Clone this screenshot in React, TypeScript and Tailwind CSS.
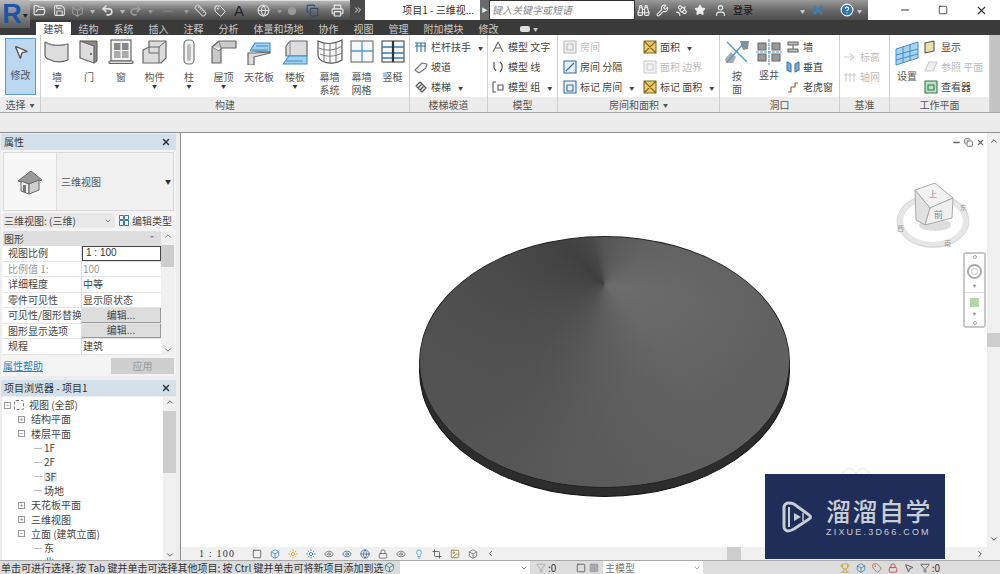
import type { ReactNode } from "react";
import {
  Binoculars, ChevronDown, ChevronLeft, ChevronRight, ChevronUp, ChevronsRight, CircleHelp, Copy, Eye, FolderOpen, Minus,
  Printer, Redo2, Ruler, Satellite, Save, Square, Star, Sun, Undo2, User, Wrench, X, Box, Globe, Tag, Filter, Lightbulb, Crop, MousePointer2, Lock, Image, Trophy,
} from "lucide-react";

const Ic = ({ s = 26, children }: { s?: number; children: ReactNode }) => (
  <svg width={s} height={s} viewBox="0 0 26 26" className="shrink-0">
    {children}
  </svg>
);

const g = { stroke: "#666", strokeWidth: 1.2, fill: "#dcdcdc", strokeLinejoin: "round" as const };
const b = { stroke: "#3f8fc9", strokeWidth: 1.1, fill: "#9fd0ef", strokeLinejoin: "round" as const };

const LARGE: { label: string[]; w: string; arrow?: boolean; icon: ReactNode }[] = [
  { label: ["墙"], w: "w-[32px]", arrow: true, icon: <Ic><path d="M1 3c7 4 16 4 23 2v16c-7 3-14 2-20-1-2-1-3-2-3-4z" {...g} /><path d="M1 3c6 4 16 4 23 2" fill="none" stroke="#888" /></Ic> },
  { label: ["门"], w: "w-[32px]", icon: <Ic><path d="M4 2h17v20l-3 2z" fill="#8a8a8a" stroke="#555" /><path d="M4 2l14 5v17L4 19z" {...g} /><circle cx="15" cy="15" r="1" fill="#555" /></Ic> },
  { label: ["窗"], w: "w-[32px]", icon: <Ic><rect x="3" y="1" width="20" height="21" fill="#f2f2f2" stroke="#666" strokeWidth="1.2" /><rect x="6" y="4" width="6.5" height="7" fill="#888" /><rect x="14" y="4" width="6.5" height="7" fill="#888" /><rect x="6" y="12" width="6.5" height="7" fill="#aaa" /><rect x="14" y="12" width="6.5" height="7" fill="#aaa" /><rect x="1" y="22" width="24" height="2.5" rx="1" {...g} /></Ic> },
  { label: ["构件"], w: "w-[35px]", arrow: true, icon: <Ic><path d="M1 11l6-3V2h17v17l-5 5H1z" {...g} /><path d="M7 8h10v6H7zM17 8l7-6M17 14v10" fill="none" stroke="#666" /></Ic> },
  { label: ["柱"], w: "w-[34px]", arrow: true, icon: <Ic><rect x="8" y="1" width="10" height="24" rx="4" fill="#f2f2f2" stroke="#777" strokeWidth="1.2" /><rect x="11" y="5" width="4" height="17" rx="2" fill="#bbb" /></Ic> },
  { label: ["屋顶"], w: "w-[35px]", arrow: true, icon: <Ic><path d="M1 24V8l7-6h17v7H10v15z" fill="#c9c9c9" stroke="#666" strokeWidth="1.2" strokeLinejoin="round" /><path d="M1 8l7 4 2-3" fill="#eee" stroke="#888" /><path d="M8 2l2 7" stroke="#888" /></Ic> },
  { label: ["天花板"], w: "w-[36px]", icon: <Ic><path d="M4 12L9 4h15v9z" {...b} /><path d="M2 26V14h7l15-1v1L8 18v8z" {...g} /><path d="M10 7h12M6 11h16" stroke="#3f8fc9" /></Ic> },
  { label: ["楼板"], w: "w-[36px]", arrow: true, icon: <Ic><path d="M8 2h17v15H4V7z" {...g} /><path d="M8 2v15" stroke="#888" /><path d="M1 25l6-8h18v8z" {...b} /><path d="M4 22h17" stroke="#3f8fc9" /></Ic> },
  { label: ["幕墙", "系统"], w: "w-[33px]", icon: <Ic><path d="M1 2c8 4 16 3 24-1v20c-6 4-14 4-20 1-3-2-4-4-4-6z" fill="#fafafa" stroke="#555" strokeWidth="1.2" /><path d="M7 4v19M13 5v19M19 4v19M2 9c7 3 15 3 23-2M3 15c6 3 15 3 22-1" fill="none" stroke="#777" /></Ic> },
  { label: ["幕墙", "网格"], w: "w-[31px]", icon: <Ic><rect x="2" y="2" width="22" height="21" fill="#f7f7f7" stroke="#777" strokeWidth="1.2" /><path d="M2 12h22M13 2v21" stroke="#4d9bd1" strokeWidth="1.3" /></Ic> },
  { label: ["竖梃"], w: "w-[31px]", icon: <Ic><rect x="2" y="2" width="22" height="21" fill="#f7f7f7" stroke="#555" strokeWidth="1.2" /><path d="M2 8h22M2 14h22M2 19h22" stroke="#2f7fb5" strokeWidth="1.4" /><path d="M13 2v21" stroke="#333" strokeWidth="2.2" /></Ic> },
];

const Small = ({ icon, text, arrow, dim }: { icon: ReactNode; text: string; arrow?: boolean; dim?: boolean }) => (
  <div className={`flex items-center gap-[3px] h-[20px] whitespace-nowrap ${dim ? "text-[#bdbdbd]" : "text-[#444]"}`}>
    {icon}
    <span className="whitespace-pre">{text}</span>
    {arrow && <span className="ml-[4px] text-[5px]">▼</span>}
  </div>
);

const PanelFoot = ({ children }: { children: ReactNode }) => (
  <div className="h-[15px] bg-[#ececec] flex items-center justify-center text-[#555] whitespace-nowrap">{children}</div>
);

const Panel = ({ w, foot, children }: { w: string; foot: ReactNode; children: ReactNode }) => (
  <div className={`${w} shrink-0 flex flex-col border-r border-[#cfcfcf]`}>
    <div className="h-[63px] flex overflow-hidden">{children}</div>
    <PanelFoot>{foot}</PanelFoot>
  </div>
);

const TABS = ["结构", "系统", "插入", "注释", "分析", "体量和场地", "协作", "视图", "管理", "附加模块", "修改"];

const rowIcon = (c: string, d: string, fill = "none") => (
  <svg width="14" height="14" viewBox="0 0 14 14" className="shrink-0">
    <path d={d} fill={fill} stroke={c} strokeWidth="1.1" strokeLinejoin="round" />
  </svg>
);

const PROPS: { k: string; v: string; kind?: string }[] = [
  { k: "视图比例", v: "1 : 100", kind: "input" },
  { k: "比例值 1:", v: "100", kind: "dim" },
  { k: "详细程度", v: "中等" },
  { k: "零件可见性", v: "显示原状态" },
  { k: "可见性/图形替换", v: "编辑...", kind: "btn" },
  { k: "图形显示选项", v: "编辑...", kind: "btn" },
  { k: "规程", v: "建筑" },
];

const TREE: { t: string; pad: string; sign?: string; sel?: boolean }[] = [
  { t: "结构平面", pad: "pl-[14px]", sign: "+" },
  { t: "楼层平面", pad: "pl-[14px]", sign: "−" },
  { t: "1F", pad: "pl-[30px]" },
  { t: "2F", pad: "pl-[30px]" },
  { t: "3F", pad: "pl-[30px]", sel: true },
  { t: "场地", pad: "pl-[30px]" },
  { t: "天花板平面", pad: "pl-[14px]", sign: "+" },
  { t: "三维视图", pad: "pl-[14px]", sign: "+" },
  { t: "立面 (建筑立面)", pad: "pl-[14px]", sign: "−" },
  { t: "东", pad: "pl-[30px]" },
  { t: "北", pad: "pl-[30px]" },
];

const Scrollbar = ({ thumb }: { thumb: string }) => (
  <div className="w-[13px] shrink-0 bg-[#f0f0f0] flex flex-col items-center justify-between relative">
    <ChevronUp size={10} className="text-[#555]" />
    <div className={`absolute left-0 right-0 bg-[#cdcdcd] ${thumb}`} />
    <ChevronDown size={10} className="text-[#555]" />
  </div>
);

const PanelHeader = ({ title }: { title: string }) => (
  <div className="h-[16px] shrink-0 bg-[#d3dfe9] flex items-center justify-between pl-[3px] pr-[5px] text-[#333]">
    <span>{title}</span>
    <X size={10} strokeWidth={3.5} className="text-[#333]" />
  </div>
);

// little dropdown marker of the quick access bar
const Arrow = ({ ml, c = "text-[#bbb]" }: { ml: string; c?: string }) => (
  <span className={`w-[5px] text-[5px] shrink-0 ${ml} ${c}`}>▼</span>
);

const VIEW_ICONS = [Square, Box, Sun, Sun, Eye, Eye, Globe, Lock, Eye, Lightbulb, Crop, Image, Box];
const VIEW_COLORS = ["#555", "#3f8fc9", "#e0a030", "#3f7fb0", "#777", "#4a6fa0", "#4a6fa0", "#666", "#777", "#4a9fd0", "#555", "#a08040", "#777"];

export default function App() {
  return (
    <div className="w-[1000px] h-[574px] overflow-hidden flex flex-col bg-[#ececec] text-[10px] leading-none text-[#444] font-['Noto_Sans_CJK_SC','Noto_Sans',sans-serif]">
      {/* title bar */}
      <div className="h-[20px] shrink-0 flex bg-white relative z-10">
        <div className="w-[30px] h-[28px] shrink-0 flex items-center justify-center gap-[1px] bg-gradient-to-b from-[#b9b9b9] to-[#5c5c5c]">
          <span className="text-[27px] leading-[28px] font-bold text-[#1a55a8] font-['Liberation_Sans',sans-serif]">R</span>
          <span className="text-[5px] text-[#222]">▼</span>
        </div>
        <div className="w-[320px] shrink-0 flex items-center pl-[3px] bg-gradient-to-b from-[#b5b5b5] via-[#6f6f6f] to-[#4a4a4a] border-t border-[#ddd]">
          <FolderOpen size={13} className="text-[#eee] shrink-0" />
          <Save size={13} className="ml-[7px] text-[#ddd] shrink-0" />
          <Box size={13} className="ml-[5px] text-[#999] shrink-0" />
          <Arrow ml="ml-[6px]" />
          <Undo2 size={13} strokeWidth={3} className="ml-[6px] text-[#ddd] shrink-0" />
          <Arrow ml="ml-[6px]" />
          <Redo2 size={13} strokeWidth={3} className="ml-[4px] text-[#999] shrink-0" />
          <Arrow ml="ml-[6px]" c="text-[#999]" />
          <Minus size={14} className="ml-[8px] text-[#888] shrink-0" />
          <Arrow ml="ml-[9px]" c="text-[#999]" />
          <Ruler size={13} className="ml-[5px] text-[#ccc] shrink-0" />
          <Tag size={12} className="ml-[7px] text-[#eee] shrink-0" />
          <span className="ml-[8px] w-[10px] text-[15px] text-[#222] font-['Liberation_Sans',sans-serif]">A</span>
          <Globe size={13} className="ml-[13px] text-[#ddd] shrink-0" />
          <Arrow ml="ml-[7px]" c="text-[#999]" />
          <span className="ml-[6px] w-[8px] h-[8px] rounded-full bg-[#999] shrink-0" />
          <Copy size={13} className="ml-[10px] text-[#2c4b6e] shrink-0" />
          <Printer size={13} className="ml-[12px] text-[#eee] shrink-0" />
        </div>
        <div className="w-[15px] shrink-0 flex items-center justify-center bg-[#4a4a4a]">
          <ChevronsRight size={10} className="text-white" />
        </div>
        <div className="w-[115px] shrink-0 flex items-center justify-end pr-[6px] text-[#333]">项目1 - 三维视...</div>
        <div className="w-[9px] shrink-0 bg-[#6a6a6a] flex items-center justify-center text-[6px] text-[#eee]">▶</div>
        <div className="w-[146px] shrink-0 bg-white border border-[#333] flex items-center pl-[2px] italic text-[#888]">键入关键字或短语</div>
        <div className="w-[233px] shrink-0 flex items-center pl-[2px] bg-gradient-to-b from-[#9a9a9a] via-[#6a6a6a] to-[#4e4e4e]">
          <div className="flex items-center gap-[6px]">
            <Binoculars size={13} className="text-[#eee]" />
            <Wrench size={13} className="text-[#eee]" />
            <Satellite size={13} className="text-[#eee]" />
            <Star size={12} className="text-[#eee]" fill="#eee" />
            <User size={13} className="ml-[2px] text-[#eee]" />
          </div>
          <span className="ml-[6px] text-[#111]">登录</span>
          <span className="ml-[47px] text-[5px] text-[#ccc]">▼</span>
          <X size={14} strokeWidth={4} className="ml-[6px] text-[#3f7fb0]" />
          <CircleHelp size={14} className="ml-[15px] text-white" fill="#2f6fb5" />
          <span className="ml-[3px] text-[5px] text-[#ccc]">▼</span>
        </div>
        <div className="flex-1 flex items-center justify-between pl-[31px] pr-[12px] text-[#333]">
          <Minus size={12} />
          <Square size={10} />
          <X size={13} />
        </div>
      </div>

      {/* tabs */}
      <div className="h-[15px] shrink-0 bg-[#3a3a3a] flex items-end pl-[36px] text-[#c9c9c9]">
        <div className="h-[13px] px-[7.5px] bg-white text-[#444] flex items-center">建筑</div>
        {TABS.map((t) => (
          <div key={t} className="h-[13px] px-[7.5px] flex items-center whitespace-nowrap">{t}</div>
        ))}
        <div className="ml-[14px] h-[13px] flex items-center gap-[3px]">
          <span className="w-[10px] h-[6px] rounded-[2px] bg-[#ddd]" />
          <span className="text-[5px]">▼</span>
        </div>
      </div>

      {/* ribbon */}
      <div className="h-[78px] shrink-0 flex bg-white border-b border-[#a8a8a8]">
        <Panel w="w-[41px]" foot={<span className="flex items-center gap-[4px]">选择 <span className="text-[5px]">▼</span></span>}>
          <div className="ml-[5px] mt-[3px] w-[31px] h-[57px] bg-[#bcd8f0] border border-[#5b9bd0] flex flex-col items-center pt-[5px]">
            <MousePointer2 size={16} className="text-[#555]" fill="#eee" />
            <span className="mt-[10px] text-[#555]">修改</span>
          </div>
        </Panel>
        <Panel w="w-[369px]" foot="构建">
          {LARGE.map((it) => (
            <div key={it.label[0] + it.label[1]} className={`${it.w} shrink-0 flex flex-col items-center pt-[4px]`}>
              <div className="h-[27px]">{it.icon}</div>
              <div className="mt-[4px] text-center leading-[13px] whitespace-nowrap text-[#555]">
                {it.label.map((l) => <div key={l}>{l}</div>)}
              </div>
              {it.arrow && <span className="text-[5px] text-[#333]">▼</span>}
            </div>
          ))}
        </Panel>
        <Panel w="w-[78px]" foot="楼梯坡道">
          <div className="pl-[4px] pt-[2px]">
            <Small text="栏杆扶手" arrow icon={rowIcon("#2f6fa5", "M1 3h11M1 6h11M3 3v9M7 3v9M11 3v9", "#f0d890")} />
            <Small text="坡道" icon={rowIcon("#777", "M1 10l7-7 5 1-1 4-7 5z", "#f5f5f5")} />
            <Small text="楼梯" arrow icon={rowIcon("#555", "M2 6l4-4 6 6-4 4zM4 8l4-4M6 10l4-4", "#eee")} />
          </div>
        </Panel>
        <Panel w="w-[70px]" foot="模型">
          <div className="pl-[3px] pt-[2px]">
            <Small text="模型 文字" icon={rowIcon("#666", "M2 12L7 2l5 10M4 8h6")} />
            <Small text="模型 线" icon={rowIcon("#444", "M3 2v6M3 8l2 3M9 2c3 2 3 7 0 10")} />
            <Small text="模型 组" arrow icon={rowIcon("#555", "M2 2h3M2 2v10h3M7 5h5v5H7z")} />
          </div>
        </Panel>
        <Panel w="w-[162px]" foot={<span className="flex items-center gap-[4px]">房间和面积 <span className="text-[5px]">▼</span></span>}>
          <div className="pl-[5px] pt-[2px] w-[85px] shrink-0">
            <Small dim text="房间" icon={rowIcon("#bbb", "M1 1h12v12H1zM4 4h6v6H4z", "#eee")} />
            <Small text="房间 分隔" icon={rowIcon("#2f6fa5", "M1 1h12v12H1zM3 11l8-8", "#e8eef5")} />
            <Small text="标记 房间" arrow icon={rowIcon("#2f6fa5", "M1 1h12v12H1zM4 5h6v6H4z", "#eee")} />
          </div>
          <div className="pt-[2px]">
            <Small text="面积" arrow icon={rowIcon("#7a6a20", "M1 1h12v12H1zM1 1l12 12M13 1L1 13", "#f1c96b")} />
            <Small dim text="面积 边界" icon={rowIcon("#ccc", "M1 1h12v12H1zM4 4h6v6H4z", "#f3f3f3")} />
            <Small text="标记 面积" arrow icon={rowIcon("#7a6a20", "M1 1h12v12H1zM1 1l12 12M13 1L1 13", "#f1c96b")} />
          </div>
        </Panel>
        <Panel w="w-[120px]" foot="洞口">
          <div className="w-[34px] shrink-0 flex flex-col items-center pt-[4px]">
            <Ic>
              <path d="M16 2l9 0-1 8-5 1z" fill="#8e8e8e" />
              <path d="M1 20l6-7 5 5-3 6H2z" fill="#aaa" />
              <path d="M3 3l20 20M21 3L3 23" stroke="#4d9bd1" strokeWidth="1.4" />
            </Ic>
            <div className="mt-[4px] text-center leading-[13px] text-[#555]"><div>按</div><div>面</div></div>
          </div>
          <div className="w-[30px] shrink-0 flex flex-col items-center pt-[4px]">
            <Ic>
              <rect x="2" y="4" width="8" height="7" fill="#999" stroke="#666" />
              <rect x="16" y="4" width="8" height="7" fill="#999" stroke="#666" />
              <rect x="2" y="15" width="8" height="7" fill="#999" stroke="#666" />
              <rect x="16" y="15" width="8" height="7" fill="#999" stroke="#666" />
              <path d="M13 0v26M0 13h26" stroke="#4d9bd1" strokeWidth="1.2" strokeDasharray="3 1" />
            </Ic>
            <div className="mt-[5px] text-[#555] whitespace-nowrap">竖井</div>
          </div>
          <div className="pt-[2px] pl-[2px]">
            <Small text="墙" icon={rowIcon("#666", "M2 2h10v3H2zM2 9h10v3H2zM7 5v4", "#bbb")} />
            <Small text="垂直" icon={rowIcon("#3f7fb0", "M1 2l4 2v8L1 10zM9 4l4-2v8l-4 2z", "#7fa8c8")} />
            <Small text="老虎窗" icon={rowIcon("#a05a30", "M2 12h3V7h4V3h3")} />
          </div>
        </Panel>
        <Panel w="w-[50px]" foot="基准">
          <div className="pl-[3px] pt-[12px]">
            <Small dim text="标高" icon={rowIcon("#ccc", "M1 7h8M7 4l4 3-4 3")} />
            <Small dim text="轴网" icon={rowIcon("#ccc", "M3 3v9M7 3v9M11 3v9M1 5h12")} />
          </div>
        </Panel>
        <Panel w="w-[100px]" foot="工作平面">
          <div className="w-[34px] shrink-0 flex flex-col items-center pt-[5px]">
            <Ic><path d="M2 9l22-7v16L2 25z" fill="#a9d3ef" stroke="#3f8fc9" /><path d="M9 7v16M16 5v16M2 15l22-6M2 20l22-6" stroke="#3f8fc9" /></Ic>
            <span className="mt-[5px] text-[#555]">设置</span>
          </div>
          <div className="pt-[2px]">
            <Small text="显示" icon={rowIcon("#555", "M1 3l9-2v10l-9 2z", "#eadfae")} />
            <Small dim text="参照 平面" icon={rowIcon("#ccc", "M1 11L5 2h8l-4 9z", "#eee")} />
            <Small text="查看器" icon={rowIcon("#2f7a4a", "M1 1h12v12H1zM4 5h6v5H4z", "#bfe0c8")} />
          </div>
        </Panel>
        <div className="flex-1 bg-[#c4c4c4]" />
      </div>

      <div className="h-[20px] shrink-0 bg-[#ececec] border-b border-[#8f8f8f]" />

      {/* main */}
      <div className="flex-1 min-h-0 flex">
        <div className="w-[181px] shrink-0 pl-[1px] pr-[4px] pt-[1px] flex flex-col bg-[#ececec] border-r border-[#8f8f8f]">
          <PanelHeader title="属性" />
          <div className="h-[226px] shrink-0 bg-[#f4f4f4] flex flex-col px-[2px] pt-[2px]">
            <div className="h-[59px] shrink-0 flex items-stretch border border-[#d8d8d8] bg-[#f0f0f0]">
              <div className="w-[53px] bg-[#f7f7f7] border-r border-[#ddd] flex items-center justify-center">
                <svg width="28" height="28" viewBox="0 0 28 28">
                  <path d="M2 13L15 3l11 9-13 4z" fill="#9a9a9a" stroke="#666" />
                  <path d="M5 13l8 3v10l-8-3z" fill="#eee" stroke="#666" />
                  <path d="M13 16l10-4v10l-10 4z" fill="#cfcfcf" stroke="#666" />
                  <rect x="7" y="17" width="3" height="7" fill="#777" />
                </svg>
              </div>
              <span className="flex-1 pl-[4px] self-center text-[#555]">三维视图</span>
              <span className="self-center pr-[2px] text-[6px] text-[#333]">▼</span>
            </div>
            <div className="h-[17px] shrink-0 flex items-center mt-[1px]">
              <div className="w-[112px] flex items-center justify-between bg-[#e8e8e8] h-[15px] pl-[1px] pr-[3px]">
                三维视图: (三维)
                <ChevronDown size={8} />
              </div>
              <span className="ml-[4px] flex items-center gap-[3px]">
                <svg width="10" height="11" viewBox="0 0 10 11" className="shrink-0">
                  <path d="M.5.5h4v4h-4zM5.5.5h4v4h-4zM.5 5.5h4v5h-4zM5.5 5.5h4v5h-4z" fill="none" stroke="#3f7aa5" />
                </svg>
                编辑类型
              </span>
            </div>
            <div className="flex-1 flex min-h-0 mt-[2px]">
              <div className="flex-1 flex flex-col bg-white">
                <div className="h-[15px] bg-[#dedede] flex items-center justify-between px-[1px] pr-[6px]">
                  图形
                  <span className="text-[7px]">⌃</span>
                </div>
                {PROPS.map((p) => (
                  <div key={p.k} className={`h-[15.5px] flex border-b border-[#e4e4e4] ${p.kind === "dim" ? "text-[#999]" : ""}`}>
                    <div className="w-[79px] shrink-0 pl-[5px] flex items-center whitespace-nowrap overflow-hidden border-r border-[#ddd]">{p.k}</div>
                    {p.kind === "btn" ? (
                      <div className="flex-1 flex items-center justify-center bg-[#dcdcdc] border-b border-r border-[#999]">{p.v}</div>
                    ) : p.kind === "input" ? (
                      <div className="flex-1 flex items-center pl-[3px] border border-[#444] font-['Liberation_Sans',sans-serif] text-[#333]">{p.v}</div>
                    ) : (
                      <div className="flex-1 flex items-center pl-[1px]">{p.v}</div>
                    )}
                  </div>
                ))}
              </div>
              <Scrollbar thumb="top-[14px] h-[22px]" />
            </div>
            <div className="h-[21px] shrink-0 flex items-center justify-between">
              <span className="text-[#2a7fc0] underline">属性帮助</span>
              <span className="w-[63px] h-[16px] bg-[#cfcfcf] flex items-center justify-center text-[#999]">应用</span>
            </div>
          </div>
          <div className="h-[4px] shrink-0" />
          <PanelHeader title="项目浏览器 - 项目1" />
          <div className="flex-1 min-h-0 flex bg-white mt-[1px] ml-[1px] overflow-hidden">
            <div className="flex-1 pl-[2px] pt-[1px] overflow-hidden">
              <div className="h-[14.3px] flex items-center gap-[3px] whitespace-nowrap">
                <span className="w-[7px] h-[7px] border border-[#999] flex items-center justify-center text-[7px] text-[#777]">−</span>
                <span className="w-[10px] h-[10px] border border-dashed border-[#777] rounded-[2px]" />
                <span className="ml-[2px]">视图 (全部)</span>
              </div>
              {TREE.map((n) => (
                <div key={n.t} className={`h-[14.3px] shrink-0 flex items-center whitespace-nowrap ${n.pad}`}>
                  {n.sign ? (
                    <span className="w-[7px] h-[7px] mr-[6px] border border-[#999] flex items-center justify-center text-[7px] text-[#777]">{n.sign}</span>
                  ) : (
                    <span className="w-[8px] h-px bg-[#bbb] mr-[2px]" />
                  )}
                  <span className={n.sel ? "bg-[#e6e6e6] px-[1px]" : ""}>{n.t}</span>
                </div>
              ))}
            </div>
            <Scrollbar thumb="top-[14px] h-[62px]" />
          </div>
        </div>

        {/* canvas */}
        <div className="flex-1 relative flex flex-col bg-white">
          <div className="flex-1 flex min-h-0">
            <div className="flex-1" />
            <div className="w-[13px] shrink-0 bg-[#f0f0f0] relative flex flex-col items-center justify-between py-[3px]">
              <ChevronUp size={10} className="text-[#333]" />
              <div className="absolute left-0 right-0 top-[200px] h-[14px] bg-[#cdcdcd]" />
              <ChevronDown size={10} className="text-[#333]" />
            </div>
          </div>
          <div className="h-[13px] shrink-0 bg-[#f0f0f0] flex items-center">
            <span className="ml-[18px] w-[40px] font-['Liberation_Serif',serif] text-[10px] tracking-[1.2px] whitespace-pre text-[#333]">1 : 100</span>
            <div className="ml-[13px] flex items-center gap-[8px]">
              {VIEW_ICONS.map((I, i) => (
                <I key={i} size={10} style={{ color: VIEW_COLORS[i] }} />
              ))}
              <ChevronLeft size={9} className="text-[#444]" />
            </div>
            <div className="absolute left-[546px] bottom-0 w-[14px] h-[13px] bg-[#cdcdcd]" />
            <ChevronRight size={10} className="absolute right-[15px] bottom-[1px] text-[#333]" />
          </div>

          {/* 3D disc */}
          <div className="absolute left-[238px] top-[112px] w-[371px] h-[252px] rounded-[50%] bg-[#2d2d2d] border border-[#111]" />
          <div className="absolute left-[238px] top-[103px] w-[371px] h-[252px] rounded-[50%] border border-[#222] overflow-hidden bg-[conic-gradient(from_0deg_at_50%_19%,#565656_0deg,#646464_50deg,#6c6c6c_100deg,#696969_140deg,#5e5e5e_180deg,#4e4e4e_225deg,#464646_270deg,#3e3e3e_315deg,#484848_345deg,#565656_360deg)]">
            <div className="w-full h-full bg-[radial-gradient(ellipse_at_50%_19%,transparent_8%,rgba(88,88,88,0.55)_70%)]" />
          </div>

          {/* window controls */}
          <div className="absolute right-[15px] top-[5px] flex items-center gap-[3px] text-[#666]">
            <Minus size={9} strokeWidth={4} />
            <Copy size={9} strokeWidth={2.5} />
            <X size={9} strokeWidth={3} />
          </div>

          {/* view cube */}
          <svg width="78" height="68" viewBox="0 0 78 68" className="absolute left-[714px] top-[50px]">
            <ellipse cx="38" cy="38" rx="33" ry="24" fill="none" stroke="#e6e6e6" strokeWidth="6" />
            <ellipse cx="38" cy="38" rx="36" ry="26" fill="none" stroke="#d0d0d0" strokeWidth="0.7" />
            <ellipse cx="40" cy="42" rx="16" ry="6" fill="#dddddd" />
            <path d="M20 7L40 0l18 15-23 10z" fill="#f2f2f2" stroke="#aaa" />
            <path d="M20 7l15 18-5 17-9-5z" fill="#e0e0e0" stroke="#aaa" />
            <path d="M35 25l23-10-1 20-27 7z" fill="#f0f0f0" stroke="#aaa" />
            <text x="34" y="14" fontSize="8" fill="#888">上</text>
            <text x="39" y="35" fontSize="9" fill="#888">前</text>
            <text x="2" y="48" fontSize="7" fill="#999">西</text>
            <text x="49" y="63" fontSize="7" fill="#999">南</text>
            <text x="65" y="27" fontSize="7" fill="#999">东</text>
          </svg>

          {/* nav bar */}
          <div className="absolute left-[782px] top-[119px] w-[23px] h-[76px] rounded-[3px] border-2 border-[#c8c8c8] bg-white flex flex-col items-center justify-between py-[1px]">
            <span className="w-[4px] h-[4px] rounded-full border border-[#aaa]" />
            <span className="w-[15px] h-[15px] rounded-full border-2 border-[#aaa] flex items-center justify-center">
              <span className="w-[7px] h-[7px] rounded-full border border-[#bbb]" />
            </span>
            <span className="text-[4px] text-[#999]">▼</span>
            <span className="w-full h-px bg-[#ddd]" />
            <span className="w-[9px] h-[9px] bg-[#b7d6a8]" />
            <span className="text-[4px] text-[#999]">▼</span>
            <span className="w-[4px] h-[4px] rounded-full border border-[#aaa]" />
          </div>

          {/* faint rings behind the watermark */}
          <div className="absolute left-[661px] top-[335px] flex">
            <span className="w-[14px] h-[14px] rounded-full border border-[#e6e6e6]" />
            <span className="w-[14px] h-[14px] rounded-full border border-[#e6e6e6]" />
          </div>

          {/* watermark */}
          <div className="absolute left-[584px] top-[341px] w-[180px] h-[85px] bg-[#1f2e59] flex items-center pl-[15px] text-[#c9cdd6]">
            <svg width="34" height="36" viewBox="0 0 34 36" className="shrink-0">
              <path d="M8 4c-2 0-4 2-4 4v20c0 2 2 4 4 4 2 0 4-1 6-2l15-10c2-1 2-3 0-4L14 5C12 4 10 4 8 4z" fill="none" stroke="#c9cdd6" strokeWidth="3" />
              <path d="M9 8v20" stroke="#c9cdd6" strokeWidth="2" />
              <path d="M14 14l7 4-7 4z" fill="#c9cdd6" />
              <path d="M23 14v8" stroke="#c9cdd6" strokeWidth="1.5" />
            </svg>
            <div className="ml-[12px]">
              <div className="text-[25px] leading-[26px] font-medium tracking-[1.5px] whitespace-nowrap">溜溜自学</div>
              <div className="mt-[5px] text-[9px] tracking-[2.2px] whitespace-nowrap font-['Liberation_Sans',sans-serif]">ZIXUE.3D66.COM</div>
            </div>
          </div>
        </div>
      </div>

      {/* status bar */}
      <div className="h-[14px] shrink-0 flex items-center bg-[#dcdcdc] border-t border-[#aaa] text-[#333]">
        <div className="w-[384px] shrink-0 overflow-hidden whitespace-nowrap pl-[1px]">单击可进行选择; 按 Tab 键并单击可选择其他项目; 按 Ctrl 键并单击可将新项目添加到选择</div>
        <Box size={11} className="text-[#3f8f8f]" />
        <div className="ml-[5px] w-[130px] h-full bg-white flex items-center justify-end pr-[2px]"><ChevronDown size={8} /></div>
        <Filter size={10} className="ml-[6px] text-[#aaa]" />
        <span className="ml-[2px] w-[25px]">:0</span>
        <Square size={10} className="ml-[3px] text-[#555]" />
        <Square size={10} className="ml-[3px] text-[#999]" fill="#aaa" />
        <div className="ml-[4px] w-[100px] h-full bg-white flex items-center justify-between pl-[2px] pr-[2px] text-[#777]">主模型<ChevronDown size={8} /></div>
        <div className="ml-auto flex items-center gap-[6px] pr-[60px]">
          <Trophy size={10} className="text-[#c9a030]" />
          <Box size={10} className="text-[#4a7fa8]" />
          <Tag size={10} className="text-[#c06030]" />
          <Lock size={10} className="text-[#c04040]" />
          <MousePointer2 size={10} className="text-[#444]" />
          <Filter size={10} className="text-[#555]" />
          <span className="-ml-[4px]">:0</span>
        </div>
      </div>
    </div>
  );
}
